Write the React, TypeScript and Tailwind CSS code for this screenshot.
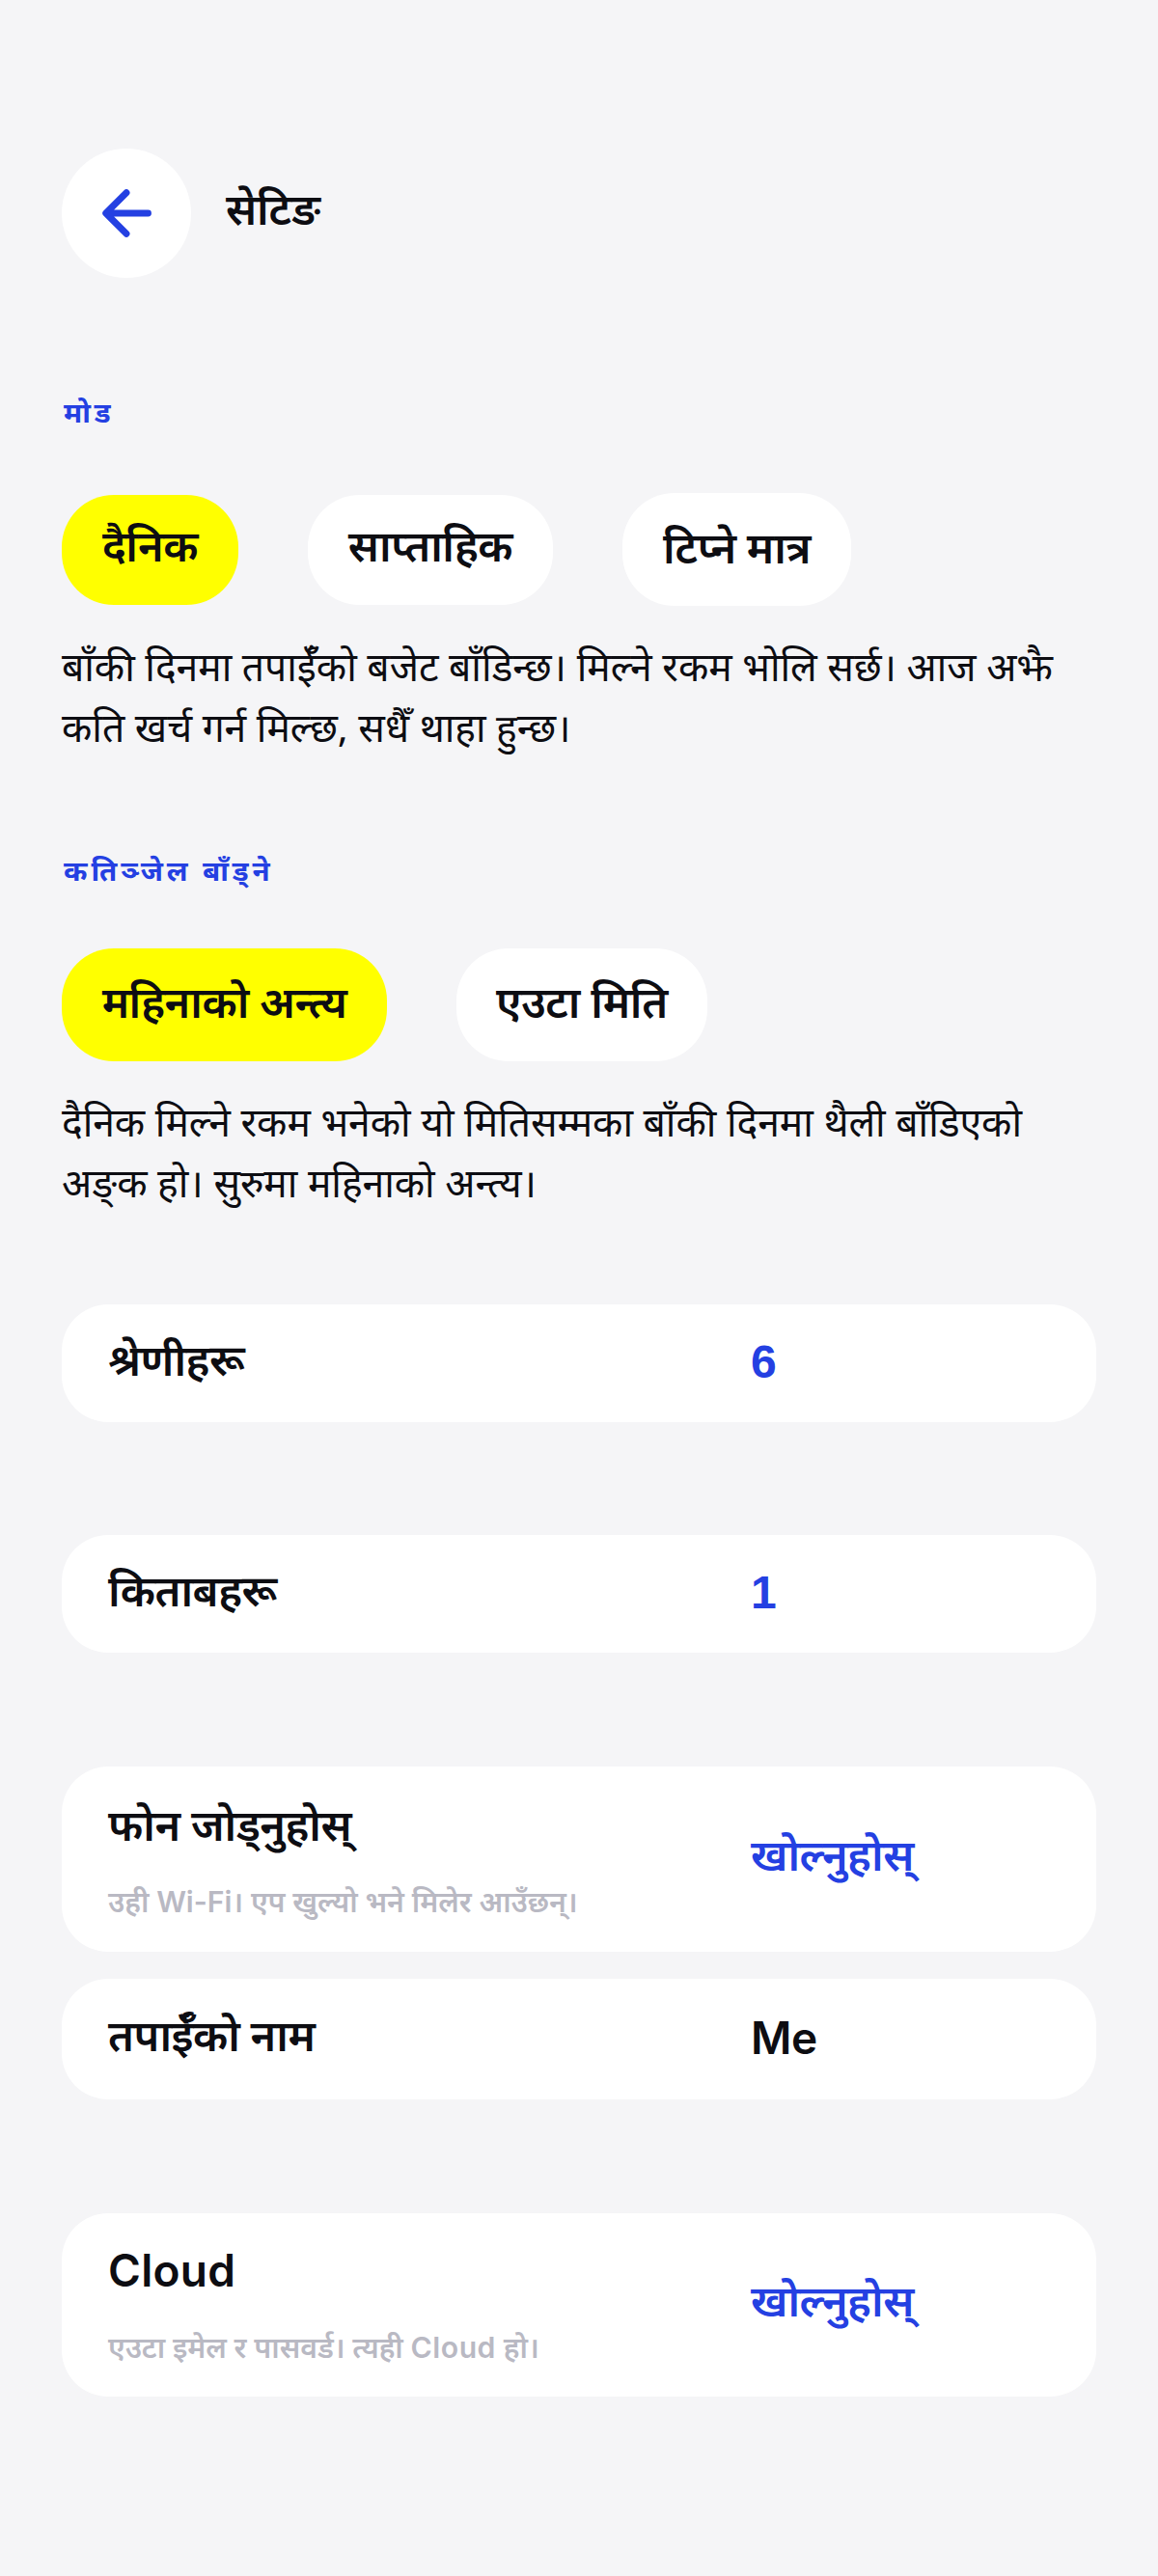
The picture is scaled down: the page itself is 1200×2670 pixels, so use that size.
import type { ReactNode } from 'react';

const Arrow = () => (
  <svg className="h-[72px] w-[72px]" viewBox="0 0 24 24" fill="none" stroke="#2440e2" strokeWidth="2.3" strokeLinecap="round" strokeLinejoin="round">
    <path d="M19.5 12H5M12 4.9 4.9 12 12 19.1" />
  </svg>
);

function Label({ children }: { children: string }) {
  return <h2 className="pl-0.5 text-[29.5px] font-bold leading-[40px] tracking-[3.9px] text-[#2440e2]">{children}</h2>;
}

function Pill({ children, className }: { children: string; className: string }) {
  return (
    <button className={`flex shrink-0 items-center justify-center rounded-[54px] font-semibold tracking-[-0.5px] whitespace-nowrap ${className}`}>
      {children}
    </button>
  );
}

function Body({ children }: { children: ReactNode }) {
  return <p className="mt-[31px] text-[40.8px] leading-[63px] whitespace-nowrap">{children}</p>;
}

function Row({ title, sub, value, className }: { title: ReactNode; sub?: ReactNode; value: ReactNode; className: string }) {
  return (
    <div className={`flex items-center rounded-[48px] bg-white px-12 font-semibold tracking-[-0.5px] ${className}`}>
      <div className={`w-[666px] ${sub ? 'pb-1' : 'pb-[9px]'}`}>
        <div className="h-[64px] leading-[64px]">{title}</div>
        {sub && <div className="mt-[28px] h-[40px] text-[30.2px] leading-[40px] tracking-[-0.05px] text-[#b9b9c3]">{sub}</div>}
      </div>
      {value}
    </div>
  );
}

const Open = () => <div className="pb-[10px] leading-[64px] text-[#2440e2]">खोल्नुहोस्</div>;
const Count = ({ children }: { children: string }) => (
  <div className="pb-[3px] font-['Liberation_Sans',sans-serif] text-[48px] leading-[64px] text-[#2440e2]">{children}</div>
);

export default function App() {
  return (
    <main lang="ne" className="h-[2670px] w-[1200px] bg-[#f5f5f7] px-16 pt-[154px] font-['Noto_Sans',sans-serif] text-[45px] text-[#0d0d12]">
      <header className="flex h-[134px] items-center gap-9">
        <button className="flex h-[134px] w-[134px] items-center justify-center rounded-full bg-white">
          <Arrow />
        </button>
        <h1 className="pb-2.5 font-semibold tracking-[-0.2px]">सेटिङ</h1>
      </header>

      <section className="pt-[119px]">
        <Label>मोड</Label>
        <div className="mt-[64px] flex h-[117px] items-center gap-[72px]">
          <Pill className="h-[114px] w-[183px] bg-[#ffff00] pb-[9px]">दैनिक</Pill>
          <Pill className="h-[114px] w-[254px] bg-white pb-[9px]">साप्ताहिक</Pill>
          <Pill className="h-[117px] w-[237px] bg-white pb-[6px]">टिप्‍ने मात्र</Pill>
        </div>
        <Body>
          बाँकी दिनमा तपाईँको बजेट बाँडिन्छ। मिल्ने रकम भोलि सर्छ। आज अझै
          <br />
          कति खर्च गर्न मिल्छ, सधैँ थाहा हुन्छ।
        </Body>
      </section>

      <section className="pt-[97px]">
        <Label>कतिञ्‍जेल बाँड्‌ने</Label>
        <div className="mt-[61px] flex items-center gap-[72px]">
          <Pill className="h-[117px] w-[337px] bg-[#ffff00] pb-[7px]">महिनाको अन्त्य</Pill>
          <Pill className="h-[117px] w-[260px] bg-white pb-[7px]">एउटा मिति</Pill>
        </div>
        <Body>
          दैनिक मिल्ने रकम भनेको यो मितिसम्मका बाँकी दिनमा थैली बाँडिएको
          <br />
          अङ्‌क हो। सुरुमा महिनाको अन्त्य।
        </Body>
      </section>

      <div className="mt-[95px]">
        <Row title="श्रेणीहरू" value={<Count>6</Count>} className="h-[122px]" />
        <Row title="किताबहरू" value={<Count>1</Count>} className="mt-[117px] h-[122px]" />
        <Row
          title="फोन जोड्‌नुहोस्"
          sub={<>उही <span className="font-['Inter']">Wi-Fi</span>। एप खुल्यो भने मिलेर आउँछन्।</>}
          value={<Open />}
          className="mt-[118px] h-[192px]"
        />
        <Row
          title="तपाईँको नाम"
          value={<div className="pb-[3px] font-['Inter'] text-[46px] leading-[64px]">Me</div>}
          className="mt-[28px] h-[125px]"
        />
        <Row
          title={<span className="font-['Inter'] text-[46px] tracking-[0.3px]">Cloud</span>}
          sub={<>एउटा इमेल र पासवर्ड। त्यही <span className="font-['Inter'] tracking-[0.5px]">Cloud</span> हो।</>}
          value={<Open />}
          className="mt-[118px] h-[190px]"
        />
      </div>
    </main>
  );
}
